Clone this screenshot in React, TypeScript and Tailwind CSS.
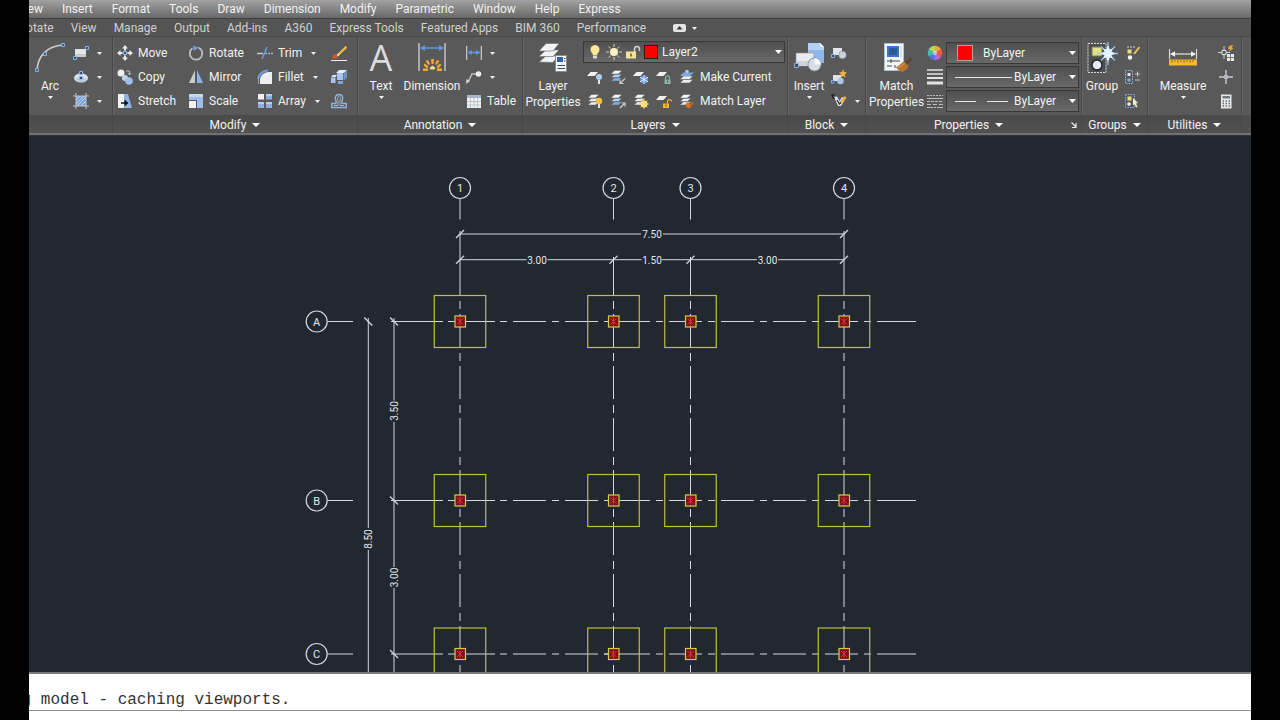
import type { ReactNode } from "react";

type Kids = { children?: ReactNode };

const menus = ["Insert", "Format", "Tools", "Draw", "Dimension", "Modify", "Parametric", "Window", "Help", "Express"];
const tabs = ["View", "Manage", "Output", "Add-ins", "A360", "Express Tools", "Featured Apps", "BIM 360", "Performance"];

/* ---------- small parts ---------- */

const Caret = () => (
    <svg width="5" height="3" viewBox="0 0 5 3" className="shrink-0"><path d="M0 0h5L2.5 3z" fill="#f4f4f4" /></svg>
);

const BigCaret = () => (
    <svg width="8" height="4" viewBox="0 0 8 4" className="shrink-0"><path d="M0 0h8L4 4z" fill="#fff" /></svg>
);

const I16 = ({ children }: Kids) => (
    <svg width="16" height="16" viewBox="0 0 16 16" fill="none" className="shrink-0">{children}</svg>
);

const I32 = ({ children }: Kids) => (
    <svg width="32" height="32" viewBox="0 0 32 32" fill="none" className="shrink-0">{children}</svg>
);

/* ---------- draw icons ---------- */

const ArcIcon = () => (
    <I32>
        <path d="M3 28C4 14 13 4 29 3" stroke="#c9ccd0" strokeWidth="1.6" />
        <path d="M1.5 26.5h3v3h-3zM9.5 10.5h3v3h-3zM27.5 1.5h3v3h-3z" fill="#4d5a6b" stroke="#7fb2ee" />
    </I32>
);

const RectIcon = () => (
    <I16>
        <path d="M2 4h11v8H2z" fill="#e2e5ea" />
        <path d="M2 9h11v3H2z" fill="#c6cad2" />
        <path d="M.5 11.5h3v3h-3zM12.5 1.5h3v3h-3z" fill="#3d4c60" stroke="#7fb2ee" />
    </I16>
);

const EllipseIcon = () => (
    <I16>
        <ellipse cx="8" cy="9" rx="7" ry="4.5" fill="#dfe3e9" />
        <ellipse cx="8" cy="10.5" rx="5" ry="2.5" fill="#b8cbe4" />
        <path d="M6.5 7.5h3v3h-3zM6.5 2.5h3v3h-3z" fill="#3d4c60" stroke="#8fb9ec" />
    </I16>
);

const HatchIcon = () => (
    <I16>
        <path d="M3 3h10v10H3z" fill="#7da4dc" />
        <path d="M3 7l4-4M3 11l8-8M4 13l9-9M8 13l5-5" stroke="#cfe0f7" strokeWidth=".8" />
        <path d="M3 0v16M13 0v16M0 3h16M0 13h16" stroke="#c3c7cc" />
    </I16>
);

/* ---------- modify icons ---------- */

const MoveIcon = () => (
    <I16>
        <path d="M8 0l3 3.5H9v2H7v-2H5zM8 16l3-3.500H9v-2H7v2H5zM0 8l3.500-3v2h2v2h-2v2zM16 8l-3.500-3v2h-2v2h2v2z" fill="#e6e8ec" />
        <path d="M6.5 6.5h3v3h-3z" fill="#3d4c60" stroke="#8fb9ec" />
    </I16>
);

const CopyIcon = () => (
    <I16>
        <circle cx="4" cy="4" r="3.5" fill="#f0f1f3" />
        <circle cx="8" cy="9" r="3" fill="#c6d5ea" />
        <circle cx="12" cy="12" r="3.8" fill="#9dbfe9" />
        <path d="M9 2h3.500v3M10.800 4l1.700 2 1.700-2" stroke="#b4b8be" />
    </I16>
);

const StretchIcon = () => (
    <I16>
        <path d="M1 1h6v14H1z" fill="#f1f2f4" />
        <path d="M7 1h4l4 14H7z" fill="#8db3e3" />
        <path d="M4 10h4" stroke="#111" strokeWidth="1.5" />
        <path d="M7.5 6.500l4 3.500-4 3.500z" fill="#111" />
    </I16>
);

const RotateIcon = () => (
    <I16>
        <path d="M4.5 3.200A6.300 6.300 0 1 0 10.500 2.600" stroke="#b9bcc1" strokeWidth="1.8" />
        <path d="M5 .5l5.500 2L6 6z" fill="#6f9fdf" />
    </I16>
);

const MirrorIcon = () => (
    <I16>
        <path d="M7 1v13H1z" fill="#c9ccd2" />
        <path d="M9 1v13h6z" fill="#8fb4e6" />
    </I16>
);

const ScaleIcon = () => (
    <I16>
        <path d="M1 1h14v14H9V7H1z" fill="#9dbdea" />
        <path d="M1 1h14v3H1z" fill="#c6d8f1" />
        <path d="M1 8h7v7H1z" fill="#eef0f2" />
    </I16>
);

const TrimIcon = () => (
    <I16>
        <path d="M0 8.500h6" stroke="#c9ccd0" strokeWidth="1.4" />
        <path d="M8 8.500h8" stroke="#8fb9ec" strokeWidth="1.4" strokeDasharray="2 1" />
        <path d="M5 14l5-12" stroke="#6d9fe0" strokeWidth="1.4" />
    </I16>
);

const FilletIcon = () => (
    <I16>
        <path d="M3 15V10C4 6 7 3 12 3h3v12z" fill="#eceef0" />
        <path d="M1 10C2 5 6 1.500 11 1.500" stroke="#6d9fe0" strokeWidth="2" />
        <path d="M1.500 10v5" stroke="#9ea2a8" />
    </I16>
);

const ArrayIcon = () => (
    <I16>
        <path d="M1 1h6v5.500H1z" fill="#f2f3f5" />
        <path d="M9 1h6v5.500H9zM1 9h6v6H1zM9 9h6v6H9z" fill="#8ab0e4" />
        <path d="M9 1h6v2H9zM1 9h6v2H1zM9 9h6v2H9z" fill="#b6cff1" />
    </I16>
);

const EraseIcon = () => (
    <I16>
        <path d="M15 .5L7.500 8l1.500 1.500L16 3z" fill="#f0b93c" />
        <path d="M7.500 8L4.500 11 6 12.500 9 9.500z" fill="#fbe6b5" />
        <path d="M4.500 9c-2 0-3.500 2-3 4.500 3 .8 5.500-.5 5.500-2.500z" fill="#d2591e" />
        <path d="M0 15.500h16" stroke="#ececec" />
    </I16>
);

const ExplodeIcon = () => (
    <I16>
        <path d="M5 4l3-3h8l-3 3z" fill="#e6eefa" />
        <path d="M6 4h6v7H6z" fill="#a8c4ec" />
        <path d="M12.500 4.500L16 1.500v7L12.500 12z" fill="#6f93c8" />
        <path d="M0 8l2-2h4l-1.500 2z" fill="#dfe8f5" />
        <path d="M0 8.500h4.500V14H0z" fill="#a8c4ec" />
        <path d="M7 12h5v3H7z" fill="#7ea6dc" />
    </I16>
);

const OffsetIcon = () => (
    <I16>
        <path d="M.8 14.500h14.400v-4H11C10 8 12.500 6 11.500 3.500 10.500.8 5.500.8 4.500 3.500 3.500 6 6 8 5 10.500H.8z" stroke="#8fb4e6" strokeWidth="1.4" />
        <path d="M3 12.500h4V8c0-2-1-3 0-4.200.7-.7 1.500-.7 2 0C10 5 9 6 9 8v4.500h4" stroke="#aab4c2" />
    </I16>
);

/* ---------- annotation icons ---------- */

const DimensionIcon = () => (
    <I32>
        <path d="M3 1v28M29 1v28" stroke="#c9ccd0" strokeWidth="1.4" />
        <path d="M5 6h22" stroke="#5f98ea" strokeWidth="1.4" />
        <path d="M4 6l5-3v6zM28 6l-5-3v6z" fill="#5f98ea" />
        <path d="M15 17h3l-.5 5h-2zM9.500 19l2.500-1 2 4-1.500 1zM23.500 19l-2.500-1-2 4 1.500 1zM7.500 23l1.500-1.500 3.500 3-1.500 2zM25.500 23l-1.500-1.500-3.500 3 1.500 2zM7 26.500h5V29H7zM21 26.500h5V29h-5z" fill="#f3a93a" />
        <path d="M13.500 26l3-2.500 3 2.500-1 1.500h-4z" fill="#fbe08a" />
    </I32>
);

const LinearIcon = () => (
    <I16>
        <path d="M.7 1v14M15.300 1v14" stroke="#c9ccd0" strokeWidth="1.2" />
        <path d="M3 7.500h10" stroke="#5f98ea" strokeWidth="1.4" />
        <path d="M1.500 7.500L6 5v5zM14.500 7.500L10 5v5z" fill="#5f98ea" />
    </I16>
);

const LeaderIcon = () => (
    <I16>
        <path d="M2 13L6 5h5" stroke="#b9bcc1" strokeWidth="1.4" />
        <path d="M0 15l.5-5 3.500 2z" fill="#d5d7da" />
        <circle cx="12.500" cy="5" r="2.8" fill="#eceef0" />
    </I16>
);

const TableIcon = () => (
    <I16>
        <path d="M1 2h14v13H1z" fill="#f0f2f4" />
        <path d="M1 2h14v3H1z" fill="#a9b7ca" />
        <path d="M1 8.500h14M1 12h14M4.500 5v10M8 5v10M11.500 5v10" stroke="#b4bbc6" strokeWidth=".8" />
    </I16>
);

/* ---------- layer icons ---------- */

const LayerPropertiesIcon = () => (
    <I32>
        <g fill="#f2f3f4" stroke="#6a6d70" strokeWidth=".6">
            <path d="M2 20L9 14h12l-5 6.500z" />
            <path d="M2 14.500L9 8h13l-6 6.500z" />
            <path d="M2 9L9 1.500h13L16 9z" />
        </g>
        <path d="M18.500 13.500h11v16h-11z" fill="#f6f7f8" stroke="#8a8f96" />
        <path d="M20 15h6v5h-6z" fill="#2f5fae" />
        <path d="M27 16.500h1.500M27 19h1.500M20.500 23.500h7.500M20.500 26.500h7.500" stroke="#3f4650" />
    </I32>
);

const Sheets = ({ blue = false }: { blue?: boolean }) => (
    <g stroke="#56595c" strokeWidth=".5">
        <path d="M1 12l3.500-3.200H12L8.500 12z" fill={blue ? "#86aee6" : "#e9ebee"} />
        <path d="M1 8.500l3.500-3.200H12L8.500 8.500z" fill={blue ? "#b6cff1" : "#e9ebee"} />
        <path d="M1 5l3.500-3.500H12L8.500 5z" fill="#f4f5f6" />
    </g>
);

const Sheet = () => <path d="M0 7l3.500-4H11L7.500 7z" fill="#eff0f2" />;

const LayerOff = () => (
    <I16>
        <Sheet />
        <circle cx="12" cy="8" r="3" fill="#a9cdf5" />
        <path d="M11 11h2v4h-2z" fill="#dfe5ec" />
    </I16>
);

const LayerIsolate = () => (
    <I16>
        <Sheets blue />
        <path d="M15 9.500l-4.500 4.500M10 11v3.500h3.500" stroke="#c9ccd0" strokeWidth="1.2" />
    </I16>
);

const LayerFreeze = () => (
    <I16>
        <Sheet />
        <circle cx="11" cy="10.500" r="4" fill="#5d93dc" />
        <path d="M11 6v9M7 8.200l8 4.600M15 8.200l-8 4.600" stroke="#e4f0ff" />
    </I16>
);

const LayerLock = () => (
    <I16>
        <Sheet />
        <path d="M9.500 10.500V8.700c0-2.500 4-2.500 4 0v1.800" stroke="#86b2a6" strokeWidth="1.2" />
        <path d="M8.500 10.500h6V15h-6z" fill="#8fb5ac" />
        <path d="M11.500 11.500v2" stroke="#3d5550" />
    </I16>
);

const MakeCurrentIcon = () => (
    <I16>
        <path d="M1 14l3.500-3.500H14L10.500 14zM1 10.500L4.500 7H14l-3.500 3.500z" fill="#e9ebee" stroke="#56595c" strokeWidth=".5" />
        <path d="M1 7l3.500-3.500H15L11 7z" fill="#7ba7e3" />
        <circle cx="8" cy="2.500" r="1.8" fill="#a9cdf5" />
    </I16>
);

const LayerOn = () => (
    <I16>
        <Sheets />
        <circle cx="12" cy="8" r="3.2" fill="#f5c23d" />
        <path d="M11 11h2v4h-2z" fill="#dfe0e2" />
    </I16>
);

const LayerUnisolate = () => (
    <I16>
        <Sheets blue />
        <path d="M10 15l4.500-4.500M11.500 10H15v3.500" stroke="#c9ccd0" strokeWidth="1.2" />
    </I16>
);

const LayerThaw = () => (
    <I16>
        <Sheets />
        <path d="M11 6v10M6 11h10M7.500 7.500l7 7M14.500 7.500l-7 7" stroke="#f0c040" />
        <circle cx="11" cy="11" r="3.5" fill="#fbe27a" />
    </I16>
);

const LayerUnlock = () => (
    <I16>
        <Sheet />
        <path d="M11.500 10.500V8.500c0-2.500 4-2.500 4 0" stroke="#f0b32c" strokeWidth="1.2" />
        <path d="M7 10.500h6V15H7z" fill="#f5b82e" />
        <path d="M10 11.500v2" stroke="#6b4a0a" />
    </I16>
);

const MatchLayerIcon = () => (
    <I16>
        <Sheets />
        <path d="M6 11.500l3-2.500 3.500 4c-1.500 2-3 2.500-4 2z" fill="#d4762a" />
        <path d="M11 13l3-3.500" stroke="#c9601e" strokeWidth="2" />
    </I16>
);

const BulbIcon = () => (
    <I16>
        <path d="M8 1C5 1 3.500 3.200 3.500 5.500 3.500 8 5.800 9 6 11.500h4C10.200 9 12.500 8 12.500 5.500 12.500 3.200 11 1 8 1z" fill="#fbe795" />
        <path d="M6.500 4.500c.3-1 1-1.500 2-1.500" stroke="#fffbe0" />
        <path d="M6 12h4v2.500H6z" fill="#d8d9db" />
    </I16>
);

const SunIcon = () => (
    <I16>
        <path d="M8 0v3M8 13v3M0 8h3M13 8h3M2.500 2.500l2 2M11.500 11.500l2 2M13.500 2.500l-2 2M4.500 11.500l-2 2" stroke="#d7d3bd" />
        <circle cx="8" cy="8" r="4" fill="#fbf2c0" />
    </I16>
);

const PadlockIcon = () => (
    <I16>
        <path d="M9.500 8V5c0-3.500 5-3.500 5 0v2" stroke="#cfd0d2" strokeWidth="1.5" />
        <path d="M1 7.500h10v7H1z" fill="#f4e19a" />
        <path d="M6 9.500v3" stroke="#5d5226" strokeWidth="1.5" />
    </I16>
);

/* ---------- block icons ---------- */

const InsertIcon = () => (
    <I32>
        <path d="M15 1h12l4 4v16H15z" fill="#8fb9ec" />
        <path d="M15 1h12l4 4v3H15z" fill="#b5d1f4" />
        <path d="M27 1v4h4z" fill="#eef5fe" />
        <path d="M3 11h18v13H3z" fill="#e8eaed" stroke="#888c92" strokeWidth=".6" />
        <path d="M3 19h18v5H3z" fill="#cfd3d9" />
        <circle cx="21.500" cy="22.500" r="6.5" fill="#d9dce1" stroke="#8b9099" />
        <path d="M21.500 22.500V16a6.500 6.500 0 0 1 6.500 6.500z" fill="#f7f8f9" />
        <path d="M1.500 21.500h4v4h-4z" fill="#3d4c60" stroke="#7fb2ee" />
    </I32>
);

const CreateBlockIcon = () => (
    <I16>
        <path d="M2 3h9v7H2z" fill="#e3e5e9" />
        <circle cx="11.500" cy="10" r="3.8" fill="#cdd3dc" stroke="#7b8088" strokeWidth=".6" />
        <path d="M.5 9.500h3v3h-3z" fill="#3d4c60" stroke="#7fb2ee" />
    </I16>
);

const EditBlockIcon = () => (
    <I16>
        <path d="M2 6h8v6H2z" fill="#dfe2e7" />
        <circle cx="9.500" cy="12" r="3.3" fill="#a9c4ea" />
        <path d="M.5 11.500H3V14H.5z" fill="#3d4c60" stroke="#7fb2ee" />
        <path d="M12 0l1 3 3 .5-2.200 2 .7 3L12 7 9.500 8.500l.6-3L8 3.500 11 3z" fill="#f3b13c" />
    </I16>
);

const AttributeIcon = () => (
    <I16>
        <path d="M3 4l3-.5L8.500 8 11 4l4 1-5 8H7z" fill="#dcdfe3" />
        <path d="M0 2h4M1.500 1v3l2 2" stroke="#1d1d1d" strokeWidth="1.2" />
        <path d="M9 9l4.500-6L15.500 4.500l-5 6z" fill="#f0a93a" />
        <path d="M6 7l2.500 4 1.500-1.500" stroke="#222" strokeWidth="1.2" />
    </I16>
);

/* ---------- property icons ---------- */

const MatchPropertiesIcon = () => (
    <I32>
        <path d="M3.500 1.500h19v27h-19z" fill="#f5f6f8" stroke="#a9c3e6" />
        <path d="M6 4h12v11H6z" fill="#3e76bb" />
        <path d="M8 6h8v7H8z" fill="#2a5a9b" />
        <path d="M20 4v11" stroke="#c3cede" />
        <path d="M6 19h13M10 17v4M6 24h5M14 23v3" stroke="#3f4650" />
        <path d="M24 20l6-4.500 1.500 2-6 5z" fill="#5f4330" />
        <path d="M15 25c3-1 5-4 8-5.500l4.500 4.500c-1 3-4 6-7 6-2-1-4.500-3-5.500-5z" fill="#b8732e" />
        <path d="M17 25.500c3-.5 4-3 6.500-4" stroke="#e0a35a" />
    </I32>
);

const ColorWheelIcon = () => (
    <I16>
        <path d="M8 8V.8A7.200 7.200 0 0 1 14.200 4.400z" fill="#f5a33a" />
        <path d="M8 8V.8A7.200 7.200 0 0 0 1.800 4.400z" fill="#a9dd5c" />
        <path d="M8 8L14.200 4.400A7.200 7.200 0 0 1 14.200 11.600z" fill="#ee5a4a" />
        <path d="M8 8L14.200 11.600A7.200 7.200 0 0 1 8 15.200z" fill="#c566d8" />
        <path d="M8 8V15.200A7.200 7.200 0 0 1 1.800 11.600z" fill="#4d79e8" />
        <path d="M8 8L1.800 11.600A7.200 7.200 0 0 1 1.800 4.400z" fill="#3fc0b0" />
        <circle cx="8" cy="8" r="2.2" fill="#fff" fillOpacity=".5" />
    </I16>
);

const LineweightIcon = () => (
    <I16>
        <path d="M0 1h16M0 5h16" stroke="#e4e4e4" strokeWidth="1.5" />
        <path d="M0 9h16" stroke="#e4e4e4" strokeWidth="2" />
        <path d="M0 14h16" stroke="#e4e4e4" strokeWidth="3" />
    </I16>
);

const LinetypeIcon = () => (
    <I16>
        <path d="M0 2.500h16" stroke="#bdbdbd" strokeDasharray="2 1" />
        <path d="M0 5.500h16" stroke="#bdbdbd" />
        <path d="M0 8.500h16" stroke="#bdbdbd" strokeDasharray="3 1" />
        <path d="M0 11.500h16" stroke="#bdbdbd" strokeDasharray="4 2" />
        <path d="M0 14.500h16" stroke="#bdbdbd" strokeDasharray="6 1 2 1" />
    </I16>
);

/* ---------- group + utility icons ---------- */

const GroupIcon = () => (
    <I32>
        <path d="M2 1.500h18v29H2z" fill="#4c4e50" stroke="#d8d8d8" strokeDasharray="2 1" />
        <path d="M6 5h10v9H6z" fill="#e3e08a" stroke="#77764a" />
        <circle cx="11" cy="23" r="5" fill="#e6edf2" stroke="#1f2327" strokeWidth="1.4" />
        <path d="M22 0v23M11 11.500h21M15 4.500l14 14M29 4.500l-14 14" stroke="#8fc4f6" strokeWidth="1.3" />
        <path d="M22 3l1.800 4.500L27 6.500l-1.500 3.300 4.500 1.700-4.500 1.700 1.500 3.300-3.200-1L22 20l-1.800-4.500-3.200 1 1.500-3.300-4.500-1.700 4.500-1.700L17 6.500l3.200 1z" fill="#e4f3ff" />
    </I32>
);

const UngroupIcon = () => (
    <I16>
        <path d="M3 2h9" stroke="#d8d8d8" strokeDasharray="2 1" />
        <path d="M3.500 4.500h4v4h-4z" fill="#e3e08a" />
        <circle cx="6" cy="12.500" r="2.2" fill="#f2f4f6" />
        <path d="M15.500 2L10 9" stroke="#eac45c" strokeWidth="2" />
    </I16>
);

const GroupEditIcon = () => (
    <I16>
        <path d="M1.500 1.500h7v13h-7z" stroke="#8fb9ec" strokeDasharray="1.5 1" />
        <path d="M3.500 4h3v3h-3z" fill="#e8e8e8" />
        <circle cx="5" cy="11" r="1.8" fill="#7fa8ea" />
        <path d="M11 5h5M13.500 2.500v5M11 11h5" stroke="#c3c7cc" />
    </I16>
);

const GroupSelectIcon = () => (
    <I16>
        <path d="M1.500 1.500h9v13h-9z" stroke="#7fa8ea" strokeDasharray="1.5 1" />
        <path d="M3.500 3.500h4v4h-4z" fill="#e3e08a" />
        <circle cx="5" cy="11" r="1.8" fill="#f2f4f6" />
        <path d="M9 5l5 5-2 .5 1.500 3.500-1.500.5-1.500-3.500L9 12.500z" fill="#eef2c8" />
    </I16>
);

const MeasureIcon = () => (
    <I32>
        <path d="M2.500 7v10M29.500 7v10" stroke="#d4d6d9" strokeWidth="1.2" />
        <path d="M4 12h24" stroke="#e4e5e7" strokeWidth="1.2" />
        <path d="M3 12l5-2.800v5.600zM29 12l-5-2.800v5.600z" fill="#eceef0" />
        <path d="M2 17.500h28v6H2z" fill="#f5b92f" />
        <path d="M5 18v3M8 18v2M11 18v3M14 18v2M17 18v3M20 18v2M23 18v3M26 18v2" stroke="#9a6d16" />
    </I32>
);

const PointFilterIcon = () => (
    <I16>
        <path d="M6 1v13M0 7.500h12" stroke="#d0d2d5" />
        <path d="M4 5.500h4v4H4z" fill="#55585b" stroke="#e2e3e5" />
        <path d="M11 1l4-1-1 3h1.500L11 7l1-3h-2z" fill="#f0a238" />
        <path d="M9 9h7v7H9z" fill="#ececec" />
        <path d="M9 12.500h7M12.500 9v7" stroke="#777" />
    </I16>
);

const PointIcon = () => (
    <I16>
        <path d="M8 1v14M1 8h14" stroke="#c9cbce" strokeWidth="1.4" />
        <path d="M6 6h4v4H6z" fill="#b3b6ba" />
    </I16>
);

const CalculatorIcon = () => (
    <I16>
        <path d="M3 1.500h10.500v14H3z" fill="#e8e9eb" />
        <path d="M4.500 3h7.500v2.500H4.500z" fill="#75797e" />
        <path d="M4.500 8h7.500M4.500 10.500h7.500M4.500 13h7.500" stroke="#6b6e72" strokeWidth="1.5" strokeDasharray="1.5 1.5" />
    </I16>
);

/* ---------- ribbon building blocks ---------- */

const Panel = ({ title, className, launcher, children }: Kids & { title?: string; className: string; launcher?: boolean }) => (
    <section className={`flex shrink-0 flex-col border-r border-[#474747] shadow-[1px_0_0_#646464] ${className}`}>
        <div className="flex h-[78px] pt-1 pb-0.5">{children}</div>
        <div className="flex h-[18px] items-center bg-linear-to-b from-[#4a4a4a] to-[#515151] pt-px">
            {title && (
                <button type="button" className="flex flex-1 items-center justify-center gap-1.5 text-[12px] text-[#f2f2f2]">
                    {title}
                    <BigCaret />
                </button>
            )}
            {launcher && (
                <button type="button" aria-label="Properties palette" className="w-2.5">
                    <svg width="6" height="6" viewBox="0 0 6 6" fill="none">
                        <path d="M.5 .5l4 4M5 1v4.500H1" stroke="#e8e8e8" strokeWidth="1.2" />
                    </svg>
                </button>
            )}
        </div>
    </section>
);

const LargeButton = ({ icon, label, className, caret }: { icon: ReactNode; label: string[]; className: string; caret?: boolean }) => (
    <button type="button" className={`flex shrink-0 flex-col items-center pt-px ${className}`}>
        {icon}
        <span className="flex flex-col pt-1 text-[12px] leading-4">
            {label.map((line) => <span key={line}>{line}</span>)}
        </span>
        {caret && <span className="flex pt-0.5"><Caret /></span>}
    </button>
);

const SmallButton = ({ icon, label, caret }: { icon: ReactNode; label: string; caret?: boolean }) => (
    <button type="button" className="flex h-6 items-center gap-[5px] text-[12px] whitespace-nowrap">
        {icon}
        {label}
        {caret && <span className="pl-1"><Caret /></span>}
    </button>
);

const IconButton = ({ icon, name, caret }: { icon: ReactNode; name: string; caret?: boolean }) => (
    <button type="button" aria-label={name} className="flex h-6 items-center gap-2">
        {icon}
        {caret && <Caret />}
    </button>
);

const Combo = ({ name, value, className, children }: Kids & { name: string; value: string; className: string }) => (
    <label className={`flex items-center border border-[#393939] bg-linear-to-b from-[#505050] to-[#696969] pr-0.5 ${className}`}>
        {children}
        <select aria-label={name} defaultValue={value} className="min-w-0 flex-1 appearance-none bg-transparent text-[12px] text-[#f2f2f2] outline-none">
            <option>{value}</option>
        </select>
        <svg width="7" height="4" viewBox="0 0 7 4" className="shrink-0"><path d="M0 0h7L3.500 4z" fill="#fff" /></svg>
    </label>
);

/* ---------- drawing ---------- */

const gridX = [460, 613.5, 690.5, 844];
const gridY = [321.5, 500.5, 654];

const Bubble = ({ x, y, label }: { x: number; y: number; label: string }) => (
    <g>
        <circle cx={x} cy={y} r="10.5" fill="none" stroke="#d3d8dd" strokeWidth="1.2" />
        <text x={x} y={y + 4} textAnchor="middle" fontSize="11" fill="#e4e7ea">{label}</text>
    </g>
);

const DimText = ({ x, y, label, vertical }: { x: number; y: number; label: string; vertical?: boolean }) => (
    <text x={x} y={y + 4} textAnchor="middle" fontSize="10" fill="#e4e7ea" transform={vertical ? `rotate(-90 ${x} ${y})` : undefined}>{label}</text>
);

const Footing = ({ x, y }: { x: number; y: number }) => (
    <g fill="none" stroke="#bfc136">
        <rect x={x - 25.75} y={y - 26} width="51.5" height="52" strokeWidth="1.2" />
        <rect x={x - 5} y={y - 5.5} width="10.5" height="11" fill="#7a1218" stroke="#d2cd3c" strokeWidth="1.2" />
        <path d={`M${x - 3} ${y - 3}l6 6M${x + 3} ${y - 3}l-6 6M${x} ${y - 4}v8`} stroke="#e0303c" />
    </g>
);

const Drawing = () => (
    <svg viewBox="29 136 1222 536" preserveAspectRatio="xMidYMin slice" className="block h-full w-full">
        <g stroke="#d3d8dd" fill="none">
            {/* grid axes */}
            {gridX.map((x) => (
                <g key={x}>
                    <path d={`M${x} 198.5V219.5`} />
                    <path d={`M${x} 301V672`} strokeDasharray="8 5 33 6" />
                    {gridY.map((y) => <path key={y} d={`M${x} ${y - 6}v12`} />)}
                </g>
            ))}
            {gridY.map((y) => (
                <g key={y}>
                    <path d={`M327.5 ${y}H353M391 ${y}H443M448 ${y}H495M604 ${y}H620M877 ${y}H916`} />
                    <path d={`M500 ${y}H877`} strokeDasharray="7 6 33 6" />
                </g>
            ))}
            {/* dimensions along the top */}
            <path d="M460 231V295M844 231V295M613.5 257V295M690.5 257V295" />
            <path d="M460 234H641M663 234H844" />
            <path d="M460 259.7H526.5M547.5 259.7H641.5M662 259.7H757M778 259.7H844" />
            {[[460, 234], [844, 234], ...gridX.map((x) => [x, 259.7])].map(([x, y]) => (
                <path key={`${x}-${y}`} d={`M${x - 4} ${y + 4}l8 -8`} strokeWidth="1.3" />
            ))}
            {/* dimensions down the left side */}
            <path d="M368.3 318V528M368.3 550V672" />
            <path d="M394 318V400.5M394 422V567M394 588V672" />
            {[[368.3, 321.5], ...gridY.map((y) => [394, y])].map(([x, y]) => (
                <path key={`${x}-${y}`} d={`M${x - 4} ${y - 4}l8 8`} strokeWidth="1.3" />
            ))}
        </g>
        {gridX.map((x) => gridY.map((y) => <Footing key={`${x}-${y}`} x={x} y={y} />))}
        {gridX.map((x, i) => <Bubble key={x} x={x} y={188} label={`${i + 1}`} />)}
        {gridY.map((y, i) => <Bubble key={y} x={316.7} y={y} label={"ABC"[i]} />)}
        <DimText x={652} y={234} label="7.50" />
        <DimText x={537} y={260} label="3.00" />
        <DimText x={652} y={260} label="1.50" />
        <DimText x={767.5} y={260} label="3.00" />
        <DimText x={394} y={411} label="3.50" vertical />
        <DimText x={394} y={577.5} label="3.00" vertical />
        <DimText x={368.3} y={539} label="8.50" vertical />
    </svg>
);

/* ---------- page ---------- */

const App = () => (
    <div className="h-screen overflow-hidden bg-black px-[29px] font-['Roboto',sans-serif] text-[12px] text-[#f2f2f2]">
        <div className="flex h-full flex-col overflow-hidden bg-[#545454]">
            <nav aria-label="Menu" className="flex h-[19px] shrink-0 items-center gap-[19px] border-b border-[#404040] bg-linear-to-b from-[#a2a2a2] to-[#686868] whitespace-nowrap">
                <button type="button" className="-ml-3">View</button>
                {menus.map((m) => <button type="button" key={m}>{m}</button>)}
            </nav>

            <nav aria-label="Ribbon tabs" className="flex h-[18px] shrink-0 items-center gap-[17px] border-b border-[#484848] pt-px text-[#d0d0d0] whitespace-nowrap">
                <button type="button" className="-ml-6">Annotate</button>
                {tabs.map((t) => <button type="button" key={t}>{t}</button>)}
                <button type="button" aria-label="Minimize ribbon" className="flex items-center gap-1.5 pl-2.5">
                    <svg width="13" height="8" viewBox="0 0 13 8">
                        <rect width="13" height="8" rx="2" fill="#e4e4e4" />
                        <path d="M3.500 5.500h6l-3-3.500z" fill="#3a3a3a" />
                    </svg>
                    <Caret />
                </button>
            </nav>

            <div className="flex shrink-0 border-b-2 border-[#707070] bg-[#595959]">
                <Panel className="w-[84px]">
                    <LargeButton className="w-[42px]" icon={<ArcIcon />} label={["Arc"]} caret />
                    <div className="flex flex-col pl-0.5">
                        <IconButton name="Rectangle" icon={<RectIcon />} caret />
                        <IconButton name="Ellipse" icon={<EllipseIcon />} caret />
                        <IconButton name="Hatch" icon={<HatchIcon />} caret />
                    </div>
                </Panel>

                <Panel title="Modify" className="w-[245px]">
                    <div className="grid grid-cols-[71px_69px_74px_20px] pl-1">
                        <SmallButton icon={<MoveIcon />} label="Move" />
                        <SmallButton icon={<RotateIcon />} label="Rotate" />
                        <SmallButton icon={<TrimIcon />} label="Trim" caret />
                        <IconButton icon={<EraseIcon />} name="Erase" />
                        <SmallButton icon={<CopyIcon />} label="Copy" />
                        <SmallButton icon={<MirrorIcon />} label="Mirror" />
                        <SmallButton icon={<FilletIcon />} label="Fillet" caret />
                        <IconButton icon={<ExplodeIcon />} name="Explode" />
                        <SmallButton icon={<StretchIcon />} label="Stretch" />
                        <SmallButton icon={<ScaleIcon />} label="Scale" />
                        <SmallButton icon={<ArrayIcon />} label="Array" caret />
                        <IconButton icon={<OffsetIcon />} name="Offset" />
                    </div>
                </Panel>

                <Panel title="Annotation" className="w-[165px]">
                    <LargeButton
                        className="w-[46px]"
                        icon={<span className="h-8 font-['Open_Sans'] text-[36px] leading-8 text-[#dcdcdc]">A</span>}
                        label={["Text"]}
                        caret
                    />
                    <LargeButton className="w-[56px]" icon={<DimensionIcon />} label={["Dimension"]} />
                    <div className="flex flex-col pl-1.5">
                        <IconButton name="Linear" icon={<LinearIcon />} caret />
                        <IconButton name="Leader" icon={<LeaderIcon />} caret />
                        <SmallButton icon={<TableIcon />} label="Table" />
                    </div>
                </Panel>

                <Panel title="Layers" className="w-[265px]">
                    <LargeButton className="w-[60px]" icon={<LayerPropertiesIcon />} label={["Layer", "Properties"]} />
                    <div className="flex flex-1 flex-col pr-0.5">
                        <div className="flex h-6 items-start">
                            <Combo name="Layer" value="Layer2" className="h-[22px] flex-1 gap-[3px] pl-[3px]">
                                <BulbIcon />
                                <SunIcon />
                                <PadlockIcon />
                                <span className="mr-px h-[14px] w-[14px] border border-[#3c1414] bg-[#ff0000]" />
                            </Combo>
                        </div>
                        <div className="grid grid-cols-[23px_23px_23px_23px_1fr] pl-1">
                            <IconButton icon={<LayerOff />} name="Off" />
                            <IconButton icon={<LayerIsolate />} name="Isolate" />
                            <IconButton icon={<LayerFreeze />} name="Freeze" />
                            <IconButton icon={<LayerLock />} name="Lock" />
                            <SmallButton icon={<MakeCurrentIcon />} label="Make Current" />
                            <IconButton icon={<LayerOn />} name="Turn all on" />
                            <IconButton icon={<LayerUnisolate />} name="Unisolate" />
                            <IconButton icon={<LayerThaw />} name="Thaw all" />
                            <IconButton icon={<LayerUnlock />} name="Unlock" />
                            <SmallButton icon={<MatchLayerIcon />} label="Match Layer" />
                        </div>
                    </div>
                </Panel>

                <Panel title="Block" className="w-[78px]">
                    <LargeButton className="w-[42px]" icon={<InsertIcon />} label={["Insert"]} caret />
                    <div className="flex flex-col pl-px">
                        <IconButton name="Create block" icon={<CreateBlockIcon />} />
                        <IconButton name="Edit block" icon={<EditBlockIcon />} />
                        <IconButton name="Edit attributes" icon={<AttributeIcon />} caret />
                    </div>
                </Panel>

                <Panel title="Properties" className="w-[216px]" launcher>
                    <LargeButton className="w-[61px]" icon={<MatchPropertiesIcon />} label={["Match", "Properties"]} />
                    <div className="flex flex-col pr-[3px]">
                        <IconButton name="Color picker" icon={<ColorWheelIcon />} />
                        <IconButton name="Lineweights" icon={<LineweightIcon />} />
                        <IconButton name="Linetypes" icon={<LinetypeIcon />} />
                    </div>
                    <div className="flex flex-1 flex-col justify-between pt-px pr-0.5 pb-px">
                        <Combo name="Object color" value="ByLayer" className="h-[22px] gap-2.5 pl-2.5">
                            <span className="h-4 w-4 border border-[#b9a0a0] bg-[#ff0000]" />
                        </Combo>
                        <Combo name="Lineweight" value="ByLayer" className="h-[22px] gap-0.5 pl-2">
                            <span className="h-px w-[57px] bg-[#e4e4e4]" />
                        </Combo>
                        <Combo name="Linetype" value="ByLayer" className="h-[22px] gap-1.5 pl-2">
                            <span className="flex w-[53px] justify-between">
                                <span className="h-px w-[21px] bg-[#e4e4e4]" />
                                <span className="h-px w-[21px] bg-[#e4e4e4]" />
                            </span>
                        </Combo>
                    </div>
                </Panel>

                <Panel title="Groups" className="w-[66px]">
                    <LargeButton className="w-[40px]" icon={<GroupIcon />} label={["Group"]} />
                    <div className="flex flex-col pl-0.5">
                        <IconButton name="Ungroup" icon={<UngroupIcon />} />
                        <IconButton name="Group edit" icon={<GroupEditIcon />} />
                        <IconButton name="Group selection" icon={<GroupSelectIcon />} />
                    </div>
                </Panel>

                <Panel title="Utilities" className="w-[94px]">
                    <LargeButton className="w-[70px]" icon={<MeasureIcon />} label={["Measure"]} caret />
                    <div className="flex flex-col">
                        <IconButton name="Quick select" icon={<PointFilterIcon />} />
                        <IconButton name="ID point" icon={<PointIcon />} />
                        <IconButton name="Calculator" icon={<CalculatorIcon />} />
                    </div>
                </Panel>
                <div className="flex flex-1 flex-col justify-end"><div className="h-[18px] bg-[#4e4e4e]" /></div>
            </div>

            <main className="min-h-0 flex-1 border-t border-[#30343a] bg-[#212830]">
                <Drawing />
            </main>

            <footer className="h-12 shrink-0 border-t-2 border-[#7a7a7a] bg-white font-['Liberation_Mono',monospace] text-[16px] text-[#333]">
                <p className="-ml-[113px] h-9 pt-3.5 leading-6 whitespace-nowrap">Regenerating model - caching viewports.</p>
                <div className="border-t border-[#8c8c8c]" />
            </footer>
        </div>
    </div>
);

export default App;
